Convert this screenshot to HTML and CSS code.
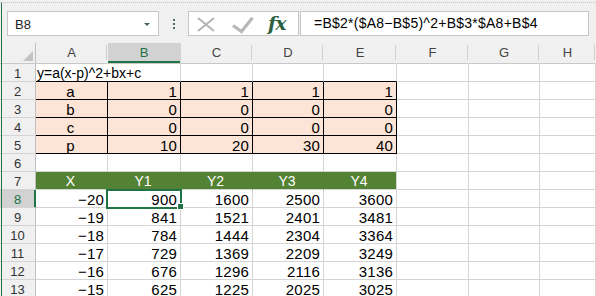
FILE: index.html
```html
<!DOCTYPE html>
<html lang="ja">
<head>
    <meta charset="UTF-8">
    <title>Book1 - Excel</title>
    <link rel="stylesheet" href="styles.css">
</head>
<body>
<div class="app">
    <div class="topband"></div>
    <div class="fbar">
        <div class="namebox"><span>B8</span><span class="caret"></span></div>
        <div class="grip">
            <svg width="2" height="12" viewBox="0 0 2 12"><rect y="0" width="2" height="2"/><rect y="4" width="2" height="2"/><rect y="8" width="2" height="2"/></svg>
        </div>
        <div class="btns">
            <svg class="btn-icons" width="70" height="23" viewBox="0 0 70 23">
                <path d="M9 6 L25 19 M25 6 L9 19" stroke="#b3b3b3" stroke-width="2" fill="none"/>
                <path d="M44 13.5 L52.5 19.5 L63.5 5.7" stroke="#b8b8b8" stroke-width="3.2" fill="none"/>
            </svg>
            <span class="fx">fx</span>
        </div>
        <div class="formula">=B$2*($A8−B$5)^2+B$3*$A8+B$4</div>
    </div>

    <div class="sheet">
        <div class="row hdr">
            <div class="corner"><span class="tri"></span></div>
            <div>A</div><div class="on">B</div><div>C</div><div>D</div><div>E</div><div>F</div><div>G</div><div>H</div>
        </div>
        <div class="row">
            <div class="rh">1</div>
            <div class="title blk">y=a(x-p)^2+bx+c</div><div class="blk"></div><div class="blk"></div><div class="blk"></div><div></div><div></div><div></div>
        </div>
        <div class="row">
            <div class="rh">2</div>
            <div class="pc ctr">a</div><div class="pc num">1</div><div class="pc num">1</div><div class="pc num">1</div><div class="pc num">1</div><div></div><div></div><div></div>
        </div>
        <div class="row">
            <div class="rh">3</div>
            <div class="pc ctr">b</div><div class="pc num">0</div><div class="pc num">0</div><div class="pc num">0</div><div class="pc num">0</div><div></div><div></div><div></div>
        </div>
        <div class="row">
            <div class="rh">4</div>
            <div class="pc ctr">c</div><div class="pc num">0</div><div class="pc num">0</div><div class="pc num">0</div><div class="pc num">0</div><div></div><div></div><div></div>
        </div>
        <div class="row">
            <div class="rh">5</div>
            <div class="pc ctr">p</div><div class="pc num">10</div><div class="pc num">20</div><div class="pc num">30</div><div class="pc num">40</div><div></div><div></div><div></div>
        </div>
        <div class="row">
            <div class="rh">6</div>
            <div></div><div></div><div></div><div></div><div></div><div></div><div></div><div></div>
        </div>
        <div class="row">
            <div class="rh">7</div>
            <div class="gh">X</div><div class="gh">Y1</div><div class="gh">Y2</div><div class="gh">Y3</div><div class="gh last">Y4</div><div></div><div></div><div></div>
        </div>
        <div class="row">
            <div class="rh on">8</div>
            <div class="num">−20</div><div class="num sel">900<span class="selbox"></span><span class="handle"></span></div><div class="num">1600</div><div class="num">2500</div><div class="num">3600</div><div></div><div></div><div></div>
        </div>
        <div class="row">
            <div class="rh">9</div>
            <div class="num">−19</div><div class="num">841</div><div class="num">1521</div><div class="num">2401</div><div class="num">3481</div><div></div><div></div><div></div>
        </div>
        <div class="row">
            <div class="rh">10</div>
            <div class="num">−18</div><div class="num">784</div><div class="num">1444</div><div class="num">2304</div><div class="num">3364</div><div></div><div></div><div></div>
        </div>
        <div class="row">
            <div class="rh">11</div>
            <div class="num">−17</div><div class="num">729</div><div class="num">1369</div><div class="num">2209</div><div class="num">3249</div><div></div><div></div><div></div>
        </div>
        <div class="row">
            <div class="rh">12</div>
            <div class="num">−16</div><div class="num">676</div><div class="num">1296</div><div class="num">2116</div><div class="num">3136</div><div></div><div></div><div></div>
        </div>
        <div class="row">
            <div class="rh">13</div>
            <div class="num">−15</div><div class="num">625</div><div class="num">1225</div><div class="num">2025</div><div class="num">3025</div><div></div><div></div><div></div>
        </div>
    </div>
</div>
</body>
</html>
```

FILE: styles.css
```css
* {
    margin: 0;
    padding: 0;
    box-sizing: border-box;
}

body {
    background: #f0f0f0;
    font-family: "Liberation Sans", Arial, sans-serif;
    color: #000;
    overflow: hidden;
}

.app {
    position: relative;
    width: 596px;
    height: 296px;
    overflow: hidden;
}

/* window edge */
.app::before {
    content: '';
    position: absolute;
    left: 1px;
    top: 3px;
    bottom: 0;
    width: 1px;
    background: #217346;
    z-index: 3;
}

.topband {
    height: 3px;
    border-bottom: 1px dotted #c4c4c4;
}

.fbar {
    display: flex;
    align-items: flex-start;
    height: 40px;
    padding: 8px 0 0 7px;
}

.namebox {
    width: 152px;
    height: 25px;
    background: #fff;
    border: 1px solid #c6c6c6;
    display: flex;
    align-items: center;
    justify-content: space-between;
    padding: 1px 8px 0 7px;
    font-size: 13px;
    color: #222;
}

.caret {
    border-left: 3px solid transparent;
    border-right: 3px solid transparent;
    border-top: 3px solid #44665a;
    margin-top: 1px;
}

.grip {
    width: 29px;
    height: 25px;
    display: flex;
    justify-content: center;
    padding-top: 8px;
}

.grip svg {
    fill: #4d7060;
    margin-left: 1px;
}

.btns {
    width: 111px;
    height: 25px;
    background: #fff;
    border: 1px solid #c6c6c6;
    display: flex;
    align-items: flex-start;
}

.fx {
    margin-left: 9px;
    font-family: "DejaVu Serif", serif;
    font-style: italic;
    font-weight: bold;
    font-size: 19px;
    line-height: 22px;
    color: #2b6040;
    letter-spacing: -1px;
}

.formula {
    width: 289px;
    height: 25px;
    margin-left: 1px;
    background: #fff;
    border: 1px solid #c6c6c6;
    padding: 3px 0 0 13px;
    font-size: 14px;
    line-height: 17px;
    letter-spacing: 0.25px;
    white-space: nowrap;
    overflow: hidden;
}

/* sheet grid */
.sheet {
    background: #fff;
}

.row {
    display: grid;
    grid-template-columns: 36px 72px 73px 72px 71px 73px 72px 71px 1fr;
    grid-template-rows: 18px;
    height: 18px;
}

.row > div {
    position: relative;
    border-right: 1px solid #d4d4d4;
    border-bottom: 1px solid #d4d4d4;
    font-size: 15px;
    line-height: 15px;
    padding: 2px 3px 0 1px;
    white-space: nowrap;
}

.hdr {
    grid-template-rows: 21px;
    height: 21px;
}

.hdr > div {
    background: linear-gradient(#cfcfcf, #cfcfcf) right 2px / 1px 15px no-repeat #f0f0f0;
    border-right-color: transparent;
    border-bottom-color: #c8c8c8;
    text-align: center;
    font-size: 13px;
    line-height: 18px;
    color: #444;
    padding: 1px 0 0;
}

.hdr > div.on {
    background: #d2d2d2;
    color: #217346;
    box-shadow: inset 0 -2px #217346;
}

.hdr .corner {
    background: #f0f0f0;
    border-right-color: #c0c0c0;
    display: flex;
    justify-content: flex-end;
    align-items: flex-end;
    padding: 0 2px 2px 0;
}

.tri {
    border-left: 10px solid transparent;
    border-bottom: 10px solid #c2c2c2;
}

.row > .rh {
    background: #f0f0f0;
    border-right-color: #c0c0c0;
    text-align: center;
    font-size: 13px;
    color: #333;
    padding: 2px 0 0;
}

.row > .rh.on {
    background: #d2d2d2;
    color: #217346;
    border-right-color: #217346;
    box-shadow: inset -1px 0 #217346;
}

.row > .title {
    grid-column: span 2;
    font-size: 14px;
}

.row > .blk {
    border-bottom-color: #000;
}

.row > .pc {
    background: #fce4d6;
    border-right-color: #000;
    border-bottom-color: #000;
}

.row > .num {
    text-align: right;
    letter-spacing: 0.2px;
}

.row > .ctr {
    text-align: center;
}

.row > .gh {
    background: #548235;
    border-right-color: #548235;
    color: #fff;
    text-align: center;
    font-size: 14px;
}

.row > .gh.last {
    border-right-color: #d4d4d4;
}

.selbox {
    position: absolute;
    left: -2px;
    top: -1px;
    right: -2px;
    bottom: -2px;
    border: 2px solid #217346;
    z-index: 1;
}

.handle {
    position: absolute;
    right: -3px;
    bottom: -2px;
    width: 5px;
    height: 5px;
    background: #217346;
    box-shadow: 0 0 0 1px #fff;
    z-index: 2;
}
```
